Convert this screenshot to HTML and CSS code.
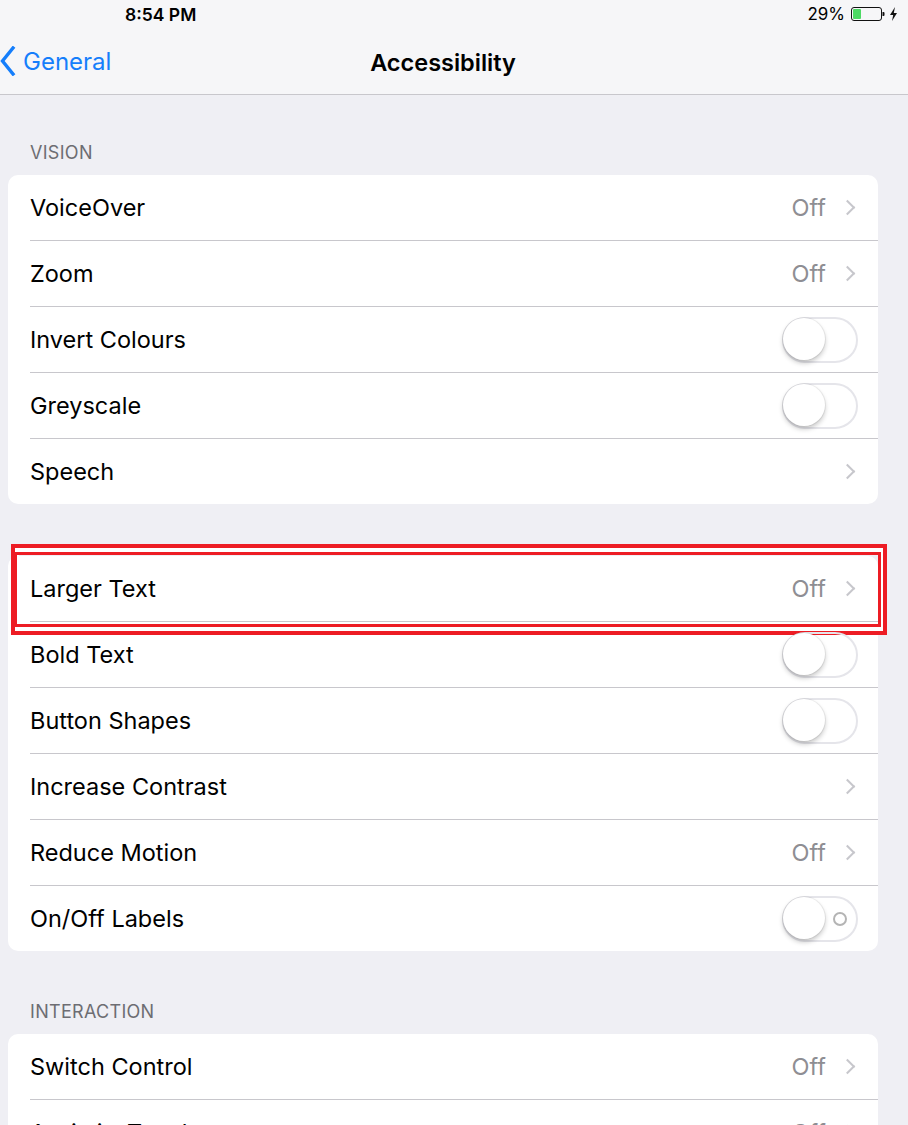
FILE: index.html
```html
<!DOCTYPE html>
<html lang="en">
<head>
    <meta charset="UTF-8">
    <meta name="viewport" content="width=device-width, initial-scale=1.0">
    <title>Accessibility</title>
    <link rel="stylesheet" href="styles.css">
</head>
<body>

    <div class="statusBar">
        <span class="time">8:54 PM</span>
        <div class="battery">
            <span>29%</span>
            <svg width="34" height="14" viewBox="0 0 34 14">
                <rect x="0.5" y="0.5" width="30" height="13" rx="2.5" fill="none" stroke="#111" stroke-width="1"/>
                <rect x="2" y="2" width="8" height="10" rx="1" fill="#4cd964"/>
                <path d="M31.5 5 h1 a1 1 0 0 1 1 1 v2 a1 1 0 0 1 -1 1 h-1 z" fill="#111"/>
            </svg>
            <svg width="9" height="14" viewBox="0 0 9 14">
                <path d="M6 0 L1 8 H4.2 L3 14 L8 6 H4.8 Z" fill="#111"/>
            </svg>
        </div>
    </div>

    <div class="navBar">
        <div class="back">
            <svg width="16" height="30" viewBox="0 0 16 30">
                <path d="M13 2 L2.5 15 L13 28" fill="none" stroke="#157efb" stroke-width="3.4" stroke-linecap="square"/>
            </svg>
            <span>General</span>
        </div>
        <div class="title">Accessibility</div>
    </div>

    <div class="sectionHeader">VISION</div>
    <div class="group">
        <div class="row"><span class="label">VoiceOver</span><span class="detail">Off</span><span class="chevron"></span></div>
        <div class="row"><span class="label">Zoom</span><span class="detail">Off</span><span class="chevron"></span></div>
        <div class="row"><span class="label">Invert Colours</span><span class="switch"></span></div>
        <div class="row"><span class="label">Greyscale</span><span class="switch"></span></div>
        <div class="row"><span class="label">Speech</span><span class="chevron"></span></div>
    </div>

    <div class="group second">
        <div class="row">
            <span class="label">Larger Text</span><span class="detail">Off</span><span class="chevron"></span>
            <div class="highlight"></div>
        </div>
        <div class="row"><span class="label">Bold Text</span><span class="switch"></span></div>
        <div class="row"><span class="label">Button Shapes</span><span class="switch"></span></div>
        <div class="row"><span class="label">Increase Contrast</span><span class="chevron"></span></div>
        <div class="row"><span class="label">Reduce Motion</span><span class="detail">Off</span><span class="chevron"></span></div>
        <div class="row"><span class="label">On/Off Labels</span><span class="switch labelled"></span></div>
    </div>

    <div class="sectionHeader">INTERACTION</div>
    <div class="group">
        <div class="row"><span class="label">Switch Control</span><span class="detail">Off</span><span class="chevron"></span></div>
        <div class="row"><span class="label">AssistiveTouch</span><span class="detail">Off</span><span class="chevron"></span></div>
    </div>

</body>
</html>
```

FILE: styles.css
```css
body {
    margin: 0;
    font-family: Inter, "Liberation Sans", sans-serif;
    background: #efeff4;
    color: #000;
    overflow: hidden;
}

/* status + nav */
.statusBar {
    height: 30px;
    background: #f6f6f8;
    display: flex;
    align-items: center;
    justify-content: space-between;
    padding: 0 10px 0 125px;
}
.time {
    font-size: 17.5px;
    font-weight: 600;
    margin-top: -2px;
}
.battery {
    display: flex;
    align-items: center;
    gap: 4px;
    font-size: 17px;
    margin-top: -2px;
}
.battery span {
    margin-right: 2px;
}
.navBar {
    height: 64px;
    background: #f6f6f8;
    border-bottom: 1px solid #c8c7cc;
    position: relative;
    display: flex;
    align-items: center;
    justify-content: center;
    padding-right: 22px;
}
.back {
    position: absolute;
    left: 0;
    top: 16px;
    display: flex;
    align-items: center;
    gap: 7px;
    color: #157efb;
    font-size: 24px;
}
.title {
    font-size: 23.5px;
    font-weight: 600;
}

/* groups */
.sectionHeader {
    font-size: 18px;
    letter-spacing: 0.3px;
    color: #6d6d72;
    padding: 47px 30px 11px;
    line-height: 22px;
}
.second + .sectionHeader {
    padding-top: 50px;
}
.group {
    background: #fff;
    margin: 0 30px 0 8px;
    border-radius: 10px;
}
.group.second {
    margin-top: 52px;
}
.row {
    height: 65px;
    display: flex;
    align-items: center;
    padding-right: 21px;
    margin-left: 22px;
    border-bottom: 1px solid #c8c7cc;
    position: relative;
}
.row:last-child {
    border-bottom: none;
}
.label {
    flex: 1;
    font-size: 23.5px;
}
.detail {
    color: #8e8e93;
    font-size: 23.5px;
    margin-right: 16px;
}
.chevron {
    width: 9px;
    height: 9px;
    border-top: 2px solid #c7c7cc;
    border-right: 2px solid #c7c7cc;
    transform: rotate(45deg);
    margin-right: 4px;
}
.switch {
    width: 72px;
    height: 42px;
    border: 2px solid #e5e5ea;
    border-radius: 23px;
    position: relative;
    margin-right: -1px;
}
.switch::before {
    content: "";
    position: absolute;
    left: -1px;
    top: -1px;
    width: 42px;
    height: 42px;
    border-radius: 50%;
    background: #fff;
    box-shadow: 0 3px 5px rgba(0, 0, 0, 0.22), 0 0 0 1px rgba(0, 0, 0, 0.06);
}
.switch.labelled::after {
    content: "";
    position: absolute;
    right: 9px;
    top: 14px;
    width: 10px;
    height: 10px;
    border: 2px solid #b4b4b4;
    border-radius: 50%;
}

/* annotation round Larger Text */
.highlight {
    position: absolute;
    left: -19px;
    right: -9px;
    top: -12px;
    bottom: -14px;
    border: 4px solid #ed1c24;
    box-shadow: inset 0 0 0 4px #fff;
}
.highlight::after {
    content: "";
    position: absolute;
    left: -1px;
    right: 2px;
    top: 4px;
    bottom: 4px;
    border: 3px solid #ed1c24;
}
```
